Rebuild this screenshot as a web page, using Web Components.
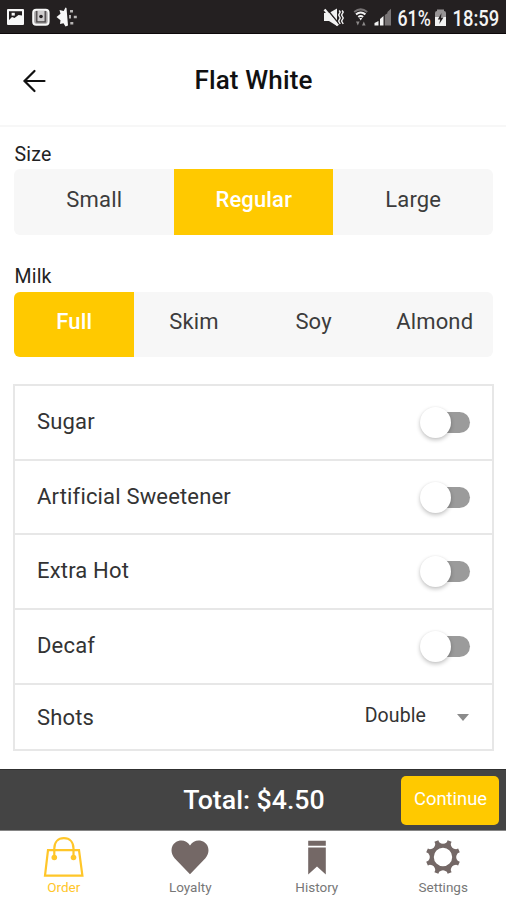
<!DOCTYPE html>
<html lang="en">
<head>
<meta charset="utf-8">
<title>Flat White</title>
<style>
  :root {
    --accent: #ffc900;
    --segment: #f7f7f7;
    --line: #e7e7e7;
    --nav: #746866;
  }

  body {
    margin: 0;
    background: #fff;
    color: #2b2b2b;
    font-family: Roboto, "Liberation Sans", sans-serif;
  }
</style>
</head>
<body>
<order-app>
  <status-bar slot="status"></status-bar>
  <page-header slot="header">Flat White</page-header>

  <option-group label="Size">
    <option-item>Small</option-item>
    <option-item selected>Regular</option-item>
    <option-item>Large</option-item>
  </option-group>
  <option-group label="Milk" style="--gap-top: 30px; --label-height: 27px; --segment-height: 65px; --text-top: 16px">
    <option-item selected>Full</option-item>
    <option-item>Skim</option-item>
    <option-item>Soy</option-item>
    <option-item style="--nudge: 4px">Almond</option-item>
  </option-group>

  <extras-list>
    <extra-row>Sugar<toggle-switch slot="control"></toggle-switch></extra-row>
    <extra-row style="--row: 72px">Artificial Sweetener<toggle-switch slot="control"></toggle-switch></extra-row>
    <extra-row>Extra Hot<toggle-switch slot="control"></toggle-switch></extra-row>
    <extra-row>Decaf<toggle-switch slot="control"></toggle-switch></extra-row>
    <extra-row style="--row: 64px; --lift: 0">Shots<drop-down slot="control">Double</drop-down></extra-row>
  </extras-list>

  <total-bar slot="footer">Total: $4.50<span slot="action">Continue</span></total-bar>
  <tab-bar slot="footer">
    <tab-item icon="bag" active>Order</tab-item>
    <tab-item icon="heart">Loyalty</tab-item>
    <tab-item icon="bookmark">History</tab-item>
    <tab-item icon="gear">Settings</tab-item>
  </tab-bar>
</order-app>

<script>
(() => {
  // Registers an element whose shadow root is built from a markup function.
  const define = (name, render) => {
    customElements.define(name, class extends HTMLElement {
      connectedCallback() {
        if (this.shadowRoot) return;
        this.attachShadow({ mode: "open" }).innerHTML = render(this);
      }
    });
  };

  /* Ring round (19, 19) with 8 short teeth and curved valleys between them */
  const gearPath = () => {
    const at = (degrees, radius) => {
      const angle = degrees * Math.PI / 180;
      return `${(19 + radius * Math.cos(angle)).toFixed(2)} ${(19 + radius * Math.sin(angle)).toFixed(2)}`;
    };
    let d = `M${at(15.5, 17.4)}`;
    for (let tooth = 22.5; tooth < 360; tooth += 45) {
      d += `L${at(tooth - 7, 17.4)}L${at(tooth + 7, 17.4)}L${at(tooth + 8, 15.2)}`;
      d += `Q${at(tooth + 22.5, 11.6)} ${at(tooth + 37, 15.2)}`;
    }
    return `${d}Z M28.2 19a9.2 9.2 0 1 0-18.4 0a9.2 9.2 0 1 0 18.4 0Z`;
  };

  const icons = {
    bag: `<svg width="42" height="42" viewBox="0 0 42 42" fill="none" stroke="currentColor" stroke-width="2.2">
      <path d="M5 14.2H36L39.4 39.6H2Z"/>
      <path d="M11.3 21V12.5C11.3 6 15.1 2.2 20.9 2.2S30.5 6 30.5 12.5V21"/>
      <circle cx="11.3" cy="21.5" r="2.8" fill="currentColor" stroke="none"/>
      <circle cx="30.5" cy="21.5" r="2.8" fill="currentColor" stroke="none"/></svg>`,
    heart: `<svg width="38" height="42" viewBox="0 0 38 42" fill="currentColor">
      <path d="M19 38.2L3.6 22.2C-1 17-.2 9.7 4.3 6.6C9.2 3.2 15.5 4.2 19 9.4C22.5 4.2 28.8 3.2 33.7 6.6C38.2 9.7 39 17 34.4 22.2Z"/></svg>`,
    bookmark: `<svg width="18" height="42" viewBox="0 0 18 42" fill="currentColor">
      <path d="M.2 4.8H17.8V9.8H.2ZM.2 11.6H17.8V38.4L9 30.5L.2 38.4Z"/></svg>`,
    gear: `<svg width="38" height="42" viewBox="0 -2 38 42" fill="currentColor"><path fill-rule="evenodd" d="${gearPath()}"/></svg>`
  };

  define("order-app", () => `
    <style>
      :host { display: flex; flex-direction: column; width: 506px; height: 900px; overflow: hidden; }
      main { flex: 1; min-height: 0; box-sizing: border-box; padding: 16px 12px 0 13px; }
    </style>
    <slot name="status"></slot>
    <slot name="header"></slot>
    <main><slot></slot></main>
    <slot name="footer"></slot>`);

  define("status-bar", () => `
    <style>
      :host { display: flex; justify-content: space-between; box-sizing: border-box; height: 34px;
        border-bottom: 1px solid #0d090a; background: #242021; color: #f4f4f4; }
      svg { display: block; }
      text { font-size: 22.5px; font-weight: 500; fill: currentColor; }
    </style>
    <svg width="80" height="33" viewBox="0 0 80 33" fill="#f8f8f8">
      <path fill-rule="evenodd" d="M8 9H23Q24 9 24 10V24Q24 25 23 25H8Q7 25 7 24V10Q7 9 8 9ZM9 11.3V20L12 17L14.5 18L18.5 15L22 15.5V11.3Z"/>
      <path d="M11.6 12.8H14.8V15.6H11.6Z"/>
      <rect x="33.2" y="9.7" width="15.4" height="15" rx="3" fill="#a5a2a3" stroke="#f8f8f8" stroke-width="2"/>
      <path d="M36.8 11V21.8H45.2V11" fill="#cfcdce" stroke="#4a4647" stroke-width="1.3"/>
      <circle cx="41" cy="16.5" r="1.8" fill="#242021"/>
      <path d="M66.5 8L68 25.5L65.5 26.5L63.5 23.3L60 24L60.5 20.3L56.5 17L60.5 13.8L59.5 10L63.7 11L65.5 7.5Z"/>
      <path d="M70 10h3v2.5h-3zM73.8 15.8h3v2.5h-3zM70.3 22h3v2.5h-3zM69 15h2v3.5h-2z" fill="#b7b5b5"/>
    </svg>
    <svg width="186" height="33" viewBox="320 0 186 33" fill="#f2f2f2">
      <path d="M324 13H329L337 8.5V26L329 21H324Z"/>
      <path d="M326.5 8.5L339 24" stroke="#242021" stroke-width="1.4"/>
      <path d="M324.5 9.5L338 25.5" stroke="#f2f2f2" stroke-width="2.4"/>
      <path d="M339.2 10.5L340.2 12L338.7 15L340.2 18L338.7 21L340.2 24M342 10.5L343.2 12L341.6 15L343.2 18L341.6 21L343.2 24" fill="none" stroke="#f2f2f2" stroke-width="1.4"/>
      <g fill="none" stroke-width="2">
        <path d="M354.2 12Q360.7 6.8 367.2 12" stroke="#767273"/>
        <path d="M356 14.4Q360.7 10.7 365.4 14.4M358.3 17Q360.7 15 363.1 17" stroke="#f2f2f2"/>
      </g>
      <path d="M359.2 18L360.7 20.5L362.2 18Z"/>
      <path d="M356 21.5h3.6l-1.8 4zM362 25.5h3.6l-1.8-4z" fill="#8c8989"/>
      <path d="M374.5 25.5V23L378.5 21V25.5ZM380 25.5V19L383.5 16V25.5Z"/>
      <path d="M384.8 25.5V15L387.4 13.2V25.5ZM387.4 25.5V12L391 8.7V25.5Z" fill="#797576"/>
      <text transform="translate(397.5 26) scale(.79 1)">61%</text>
      <path d="M435 13Q435 11 437 11V9.5H444V11Q446 11 446 13V18H435Z" fill="#979495"/>
      <path d="M435 17H446V26H435Z"/>
      <path d="M441.5 13L437.8 19.5H440.2L439.3 24L443.5 17.5H441Z" fill="#242021"/>
      <text transform="translate(452.5 26) scale(.82 1)">18:59</text>
    </svg>`);

  define("page-header", () => `
    <style>
      :host { display: grid; grid-template-columns: 70px 1fr 69px; align-items: center; box-sizing: border-box;
        height: 93px; border-bottom: 2px solid #f7f7f7; color: #111; }
      svg { display: block; margin: 2px 0 0 22px; }
      h1 { margin: 0; font-size: 26px; font-weight: 500; line-height: 30px; text-align: center; letter-spacing: .15px; }
    </style>
    <svg width="25" height="24" viewBox="0 0 25 24" fill="none" stroke="#111" stroke-width="2.2" stroke-linecap="round">
      <path d="M2.5 12H22.5M12.5 2L2.5 12L12.5 22"/></svg>
    <h1><slot></slot></h1>`);

  define("option-group", (host) => `
    <style>
      :host { display: block; margin: var(--gap-top, 0) 0 0 1px; }
      .label { height: var(--label-height, 26px); color: #222; font-size: 19.5px; line-height: 23px;
        padding-left: .5px; letter-spacing: .2px; }
      .options { display: grid; grid-auto-columns: minmax(0, 1fr); grid-auto-flow: column;
        width: 478.5px; height: var(--segment-height, 66px);
        border-radius: 6px; background: var(--segment); overflow: hidden; }
    </style>
    <div class="label">${host.getAttribute("label")}</div>
    <div class="options"><slot></slot></div>`);

  define("option-item", () => `
    <style>
      :host { display: block; box-sizing: border-box; padding: var(--text-top, 17px) 0 0 var(--nudge, 1px);
        color: #3c3c3c; font-size: 22px; line-height: 27px; letter-spacing: .15px; text-align: center; }
      :host([selected]) { background: var(--accent); color: #fff; font-weight: 500; }
    </style>
    <slot></slot>`);

  define("extras-list", () => `
    <style>
      :host { display: block; margin-top: 27px; border: 2px solid var(--line); border-bottom: 0; }
    </style>
    <slot></slot>`);

  define("extra-row", () => `
    <style>
      :host { display: flex; align-items: center; justify-content: space-between; height: var(--row, 73px);
        padding: 0 22px; border-bottom: 2px solid var(--line);
        color: #333; font-size: 22px; line-height: 27px; letter-spacing: .17px; }
      span { padding-bottom: var(--lift, 2px); }
    </style>
    <span><slot></slot></span>
    <slot name="control"></slot>`);

  define("toggle-switch", () => `
    <style>
      :host { display: flex; align-items: center; width: 50px; height: 31px; }
      .knob { width: 31px; height: 31px; flex: none; border-radius: 50%; background: #fff;
        box-shadow: 0 2px 4px rgba(0, 0, 0, .24), 0 0 2px rgba(0, 0, 0, .05); z-index: 1; }
      .track { width: 35px; height: 21px; margin-left: -16px; flex: none; border-radius: 11px; background: #9b9b9b; }
    </style>
    <div class="knob"></div><div class="track"></div>`);

  define("drop-down", () => `
    <style>
      :host { display: flex; align-items: center; gap: 31px; padding-right: 1px;
        font-size: 19.5px; line-height: 24px; letter-spacing: .1px; }
      span { margin-top: -3px; }
      i { border: 6.5px solid transparent; border-top: 7px solid #8b8b8b; border-bottom: 0; }
    </style>
    <span><slot></slot></span><i></i>`);

  define("total-bar", () => `
    <style>
      :host { display: grid; grid-template-columns: 107px 1fr 98px; align-items: center; box-sizing: border-box;
        height: 62px; padding: 0 7px 0 0; border-top: 1px solid #303030; border-bottom: 1px solid #858585;
        background: #444; color: #fff; }
      .total { font-size: 26.7px; font-weight: 500; line-height: 32px; text-align: center; }
      button { height: 49px; margin: 0; padding: 0 0 3px 1px; border: 0; border-radius: 5px; background: var(--accent);
        color: #fff; font: 18.4px/24px Roboto, "Liberation Sans", sans-serif; }
    </style>
    <span></span>
    <div class="total"><slot></slot></div>
    <button><slot name="action"></slot></button>`);

  define("tab-bar", () => `
    <style>
      :host { display: flex; justify-content: space-between; height: 69px; background: #fff; }
    </style>
    <slot></slot>`);

  define("tab-item", (host) => `
    <style>
      :host { display: flex; flex: 1; flex-direction: column; align-items: center; padding: 5px 0 0 1px; color: var(--nav); }
      :host([active]) { color: #ffc629; }
      svg { display: block; }
      span { margin-top: 1px; font-size: 13.5px; line-height: 16px; }
      :host(:not([active])) span { color: #777; }
    </style>
    ${icons[host.getAttribute("icon")]}
    <span><slot></slot></span>`);
})();
</script>
</body>
</html>
